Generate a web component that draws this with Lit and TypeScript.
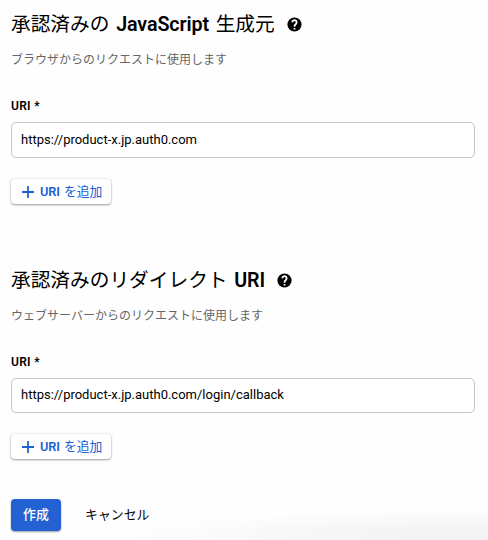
import { LitElement, html, css } from "lit";
import { customElement, property } from "lit/decorators.js";

// Latin words carry more weight than the Japanese text around them.
const emphasizeLatin = (text: string) =>
  text.split(/([A-Za-z]+)/).map((part) => (/^[A-Za-z]+$/.test(part) ? html`<b class="latin">${part}</b>` : part));

@customElement("uri-section")
class UriSection extends LitElement {
  @property() heading = "";
  @property() description = "";
  @property() value = "";

  static styles = css`
    :host {
      display: flex;
      flex-direction: column;
      align-items: flex-start;
      color: #000;
    }
    .title {
      display: flex;
      align-items: center;
      gap: 11px;
      height: 28px;
      margin: 0;
      font-size: 19.7px;
      font-weight: 400;
      line-height: 28px;
      word-spacing: 1.8px;
      white-space: nowrap;
    }
    .title .text {
      margin-top: 1px;
    }
    .latin {
      font-weight: 600;
      letter-spacing: -0.1px;
    }
    .help {
      width: 17px;
      height: 17px;
      margin-top: 1px;
    }
    .description {
      margin: 13px 0 0;
      font-size: 12px;
      line-height: 18px;
      color: #666;
    }
    .label {
      margin-top: 29px;
      font-size: 12px;
      font-weight: 600;
      line-height: 16px;
      letter-spacing: 0.3px;
    }
    .field {
      box-sizing: border-box;
      width: 100%;
      height: var(--field-height, 36px);
      margin: 8px 0 0;
      padding: 0 9px 2px;
      border: 1px solid #c4c4c4;
      border-radius: 5px;
      outline: none;
      background: #fff;
      color: #000;
      font: 400 13px Roboto, "Noto Sans CJK JP", sans-serif;
    }
    .add {
      display: flex;
      align-items: center;
      gap: 6px;
      box-sizing: border-box;
      width: 100px;
      height: 25px;
      margin: 21px 0 0;
      padding: 0 0 0 11px;
      border: 0;
      border-radius: 4px;
      background: #fff;
      box-shadow: 0 1px 2px rgba(0, 0, 0, 0.35), 0 0 3px rgba(0, 0, 0, 0.12);
      color: #2060d4;
      font: 400 12.8px / 20px Roboto, "Noto Sans CJK JP", sans-serif;
      white-space: nowrap;
    }
    .add .text {
      word-spacing: 0.8px;
    }
    .plus {
      width: 12px;
      height: 12px;
    }
  `;

  render() {
    return html`
      <h2 class="title">
        <span class="text">${emphasizeLatin(this.heading)}</span>
        <svg class="help" viewBox="0 0 24 24">
          <circle cx="12" cy="12" r="10" fill="currentColor" />
          <path d="M9 9a3 3 0 1 1 5.1 2.1l-1.2 1.3C12.2 13 12 13.6 12 15M12 17v2" fill="none" stroke="#fff" stroke-width="2.5" />
        </svg>
      </h2>
      <p class="description">${this.description}</p>
      <label class="label" for="uri">URI *</label>
      <input class="field" id="uri" type="text" .value=${this.value} spellcheck="false" />
      <button class="add" type="button">
        <svg class="plus" viewBox="0 0 12 12" stroke="currentColor" stroke-width="1.8">
          <path d="M6 0V12M0 6H12" />
        </svg>
        <span class="text">${emphasizeLatin("URI を追加")}</span>
      </button>
    `;
  }
}

@customElement("app-root")
class AppRoot extends LitElement {
  static styles = css`
    :host {
      display: block;
      box-sizing: border-box;
      height: 540px;
      padding: 10px 13px 0 11px;
      overflow: hidden;
      background: radial-gradient(ellipse 380px 32px at 100% 100%, #f2f2f2, #f5f5f5 40%, #fefefe);
      font-family: Roboto, "Noto Sans CJK JP", sans-serif;
    }
    .redirects {
      margin-top: 62px;
      --field-height: 35px;
    }
    .actions {
      display: flex;
      align-items: center;
      gap: 24px;
      margin-top: 40px;
    }
    .create,
    .cancel {
      height: 32px;
      padding: 0 0 4px;
      border: 0;
      background: none;
      color: #000;
      font: 400 12.9px Roboto, "Noto Sans CJK JP", sans-serif;
    }
    .create {
      width: 50px;
      border-radius: 4px;
      background: #2462d3;
      box-shadow: 0 1px 2px rgba(0, 0, 0, 0.4);
      color: #fff;
      font-weight: 500;
    }
  `;

  render() {
    return html`
      <uri-section
        heading="承認済みの JavaScript 生成元"
        description="ブラウザからのリクエストに使用します"
        value="https://product-x.jp.auth0.com"
      ></uri-section>
      <uri-section
        class="redirects"
        heading="承認済みのリダイレクト URI"
        description="ウェブサーバーからのリクエストに使用します"
        value="https://product-x.jp.auth0.com/login/callback"
      ></uri-section>
      <div class="actions">
        <button class="create" type="button">作成</button>
        <button class="cancel" type="button">キャンセル</button>
      </div>
    `;
  }
}
